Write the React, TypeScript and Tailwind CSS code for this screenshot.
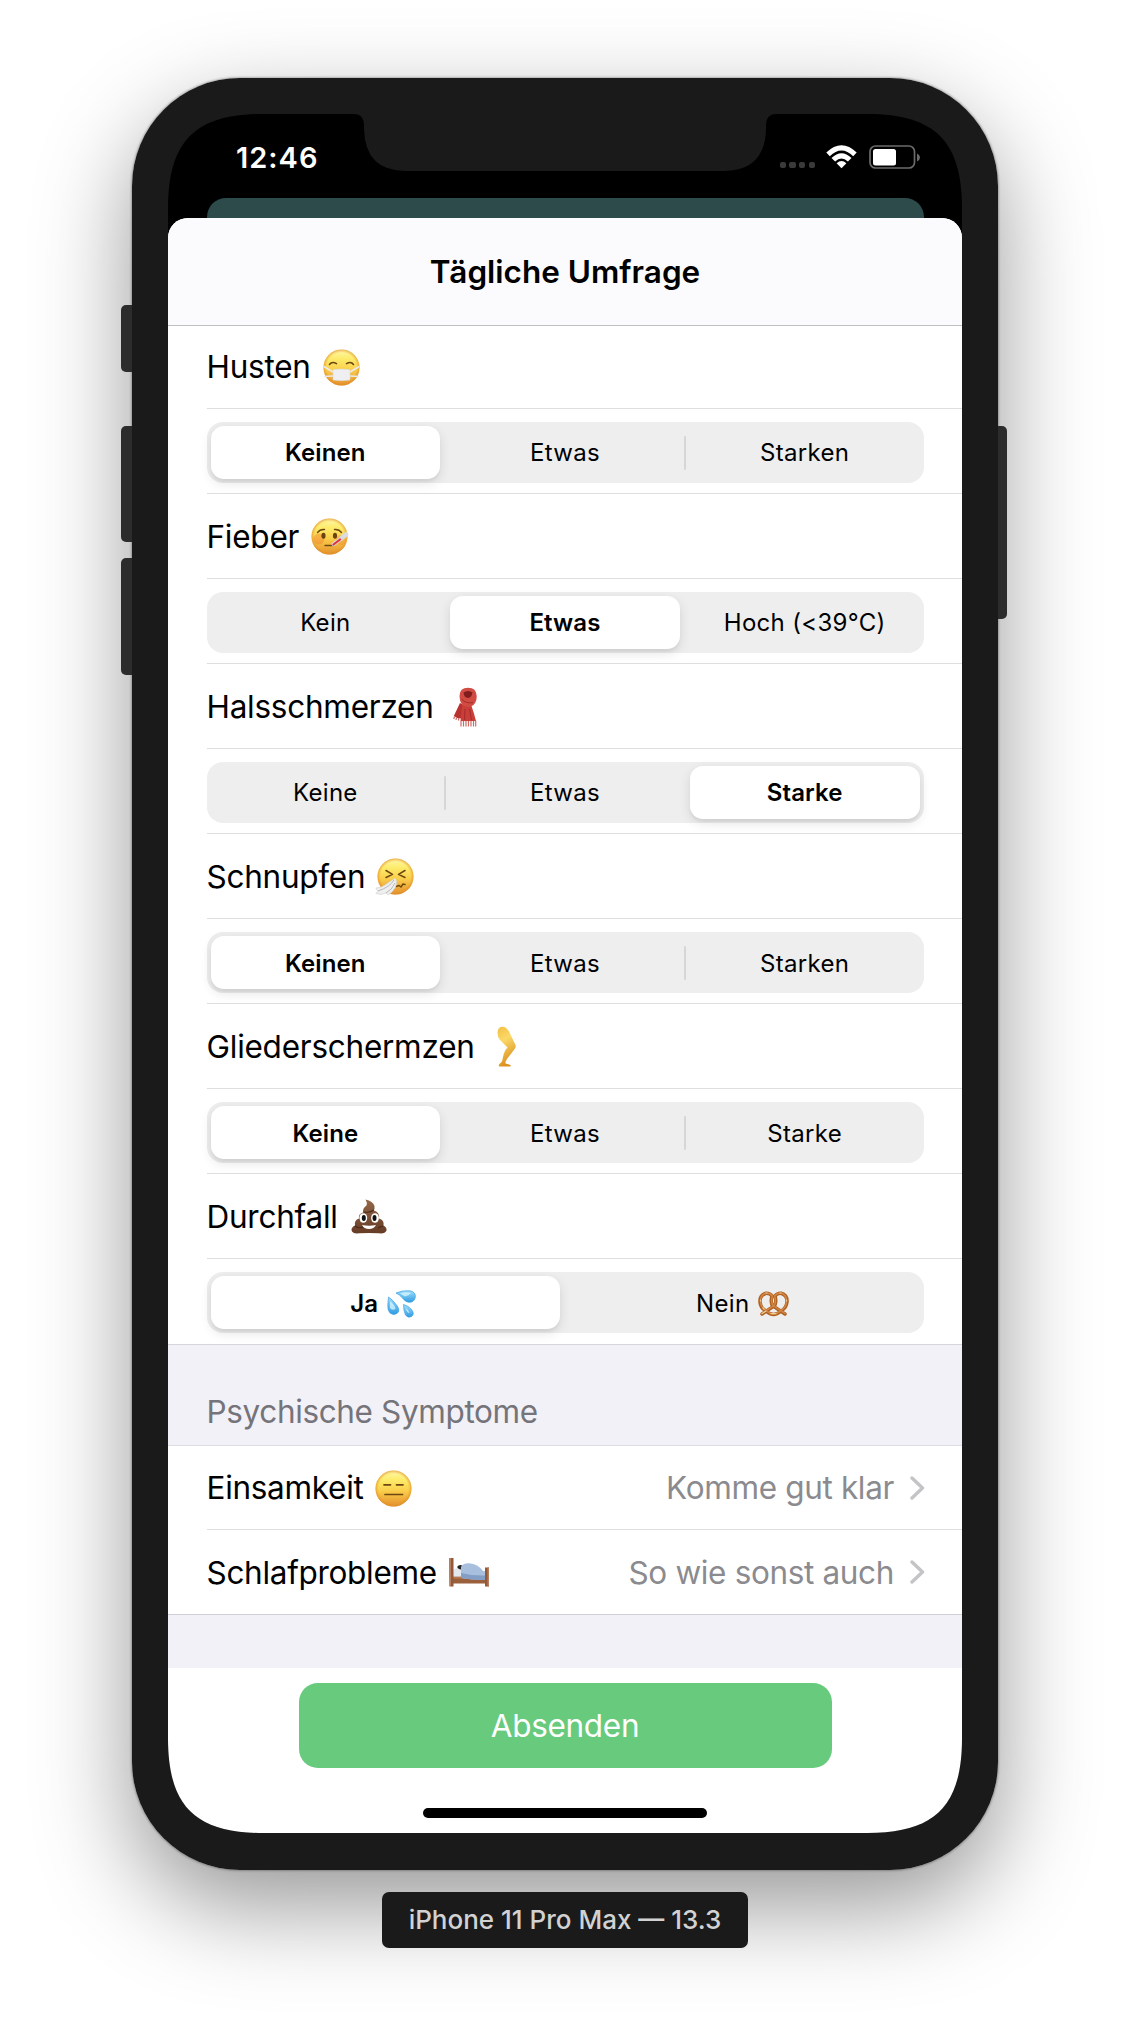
import { ReactNode } from "react";

function Face({ id, children }: { id: string; children: ReactNode }) {
  return (
    <svg viewBox="0 0 37 37" className="h-[37px] w-[37px] overflow-visible">
      <defs>
        <linearGradient id={id} x1="0" y1="0" x2="0" y2="1">
          <stop offset="0" stopColor="#fff7a8" />
          <stop offset="0.25" stopColor="#fdec6c" />
          <stop offset="0.55" stopColor="#fad04c" />
          <stop offset="1" stopColor="#e48f2c" />
        </linearGradient>
        <radialGradient id={id + "r"}>
          <stop offset="0.82" stopColor="#e99a2e" stopOpacity="0" />
          <stop offset="1" stopColor="#dd8a26" stopOpacity="0.65" />
        </radialGradient>
      </defs>
      <circle cx="18.5" cy="18.5" r="18" fill={"url(#" + id + ")"} />
      <circle cx="18.5" cy="18.5" r="18" fill={"url(#" + id + "r)"} />
      {children}
    </svg>
  );
}

function MaskFace() {
  return (
    <Face id="mask">
      <path d="M6.500 15.500Q9 12 13.500 14.600M23.500 14.600Q28 12 30.500 15.500" fill="none" stroke="#6b4712" strokeWidth="1.600" strokeLinecap="round" />
      <path d="M.8 17.500 10 23M36.200 17.500 27 23M1 27.500 10 27M36 27.500 27 27" stroke="#e9ebee" strokeWidth="1.600" />
      <path d="M10 20.500Q18.500 19.500 27 20.500V31Q18.500 32.500 10 31Z" fill="#efeff1" stroke="#d5d5d8" strokeWidth=".5" />
    </Face>
  );
}

function FeverFace() {
  return (
    <Face id="fever">
      <circle cx="8" cy="21" r="5.500" fill="#f0702e" opacity=".35" />
      <circle cx="30" cy="22" r="5" fill="#f0702e" opacity=".25" />
      <path d="M6.500 14.500Q9 11 13.500 11.500M23.500 11.500Q28 11 30.500 14.500" fill="none" stroke="#70490f" strokeWidth="1.400" strokeLinecap="round" />
      <ellipse cx="12.500" cy="17.800" rx="2.100" ry="3" fill="#6b4310" />
      <ellipse cx="24" cy="17.800" rx="2.100" ry="3" fill="#6b4310" />
      <path d="M14 27.500 22 27.500" fill="none" stroke="#70490f" strokeWidth="1.400" strokeLinecap="round" />
      <path d="M30 20.500 35 16.500" stroke="#dcdce0" strokeWidth="4.800" strokeLinecap="round" />
      <path d="M22.500 26.300 31 20" stroke="#d9d9de" strokeWidth="3.800" strokeLinecap="round" />
      <path d="M22.500 26.500 29 21.500" stroke="#e0343c" strokeWidth="2.200" strokeLinecap="round" />
    </Face>
  );
}

function SneezeFace() {
  return (
    <Face id="sneeze">
      <path d="M9 12.500 15.500 16.300 9 19.500M28 12.500 21.500 16.300 28 19.500" fill="none" stroke="#6e4710" strokeWidth="1.500" strokeLinecap="round" strokeLinejoin="round" />
      <path d="M19 28.500 22 27.500 24 29 26 26 28 26.500" fill="none" stroke="#6e4710" strokeWidth="1.500" strokeLinecap="round" />
      <path d="M18.500 20Q21 25 18 30 15 35 11 37L9 35Q4 37.500-1 35.500L1 33Q-1 32-1 30 4 30 8 27T18.500 20Z" fill="#efefef" stroke="#cfcfcf" strokeWidth=".6" />
      <path d="M17 22Q13 29 1 33M18 25Q15 32 9 35" fill="none" stroke="#b9b9bb" strokeWidth="1" />
    </Face>
  );
}

function BlankFace() {
  return (
    <Face id="blank">
      <path d="M9 14.800h6.500M21.500 14.800H28M10 24.500h17.500" stroke="#6e4710" strokeWidth="1.700" strokeLinecap="round" />
    </Face>
  );
}

function Scarf() {
  return (
    <svg viewBox="0 0 24 40" className="ml-[7px] h-[40px] w-[24px]">
      <path d="M7 16 .8 29Q4 31.500 8 31.500L15 20Z" fill="#b8332f" />
      <path d="M9 18 7.500 34H23Q21 26 18.500 19Z" fill="#c93e38" />
      <path d="M6.500 9Q6.500 .8 15 .8T23.700 9Q23.700 15 20.500 18 14.500 22 9 17.500 6.500 14 6.500 9Z" fill="#d24b43" />
      <path d="M10.500 5.500Q15 2.500 19.500 5.500 18.500 10.500 15 11 11 10.500 10.500 5.500Z" fill="#7f1d1c" />
      <path d="M8.500 12Q13 17 20 15.500M12 22 11.500 33M16.500 22 18.500 33" fill="none" stroke="#a42c2a" strokeWidth="1" />
      <path d="M1.500 29.500 .8 32M3.500 30.500 3 33M5.700 31 5.500 33.500M8 34V39.500M10.500 34V39.500M13 34V39.500M15.500 34V39.500M18 34V39.500M20.500 34V39.500M22.700 34V39.500" stroke="#cf6b66" strokeWidth="1.200" />
    </svg>
  );
}

function Leg() {
  return (
    <svg viewBox="0 0 20 41" className="ml-[10px] h-[41px] w-[20px]">
      <defs>
        <linearGradient id="leg" x1="0" y1="0" x2=".3" y2="1">
          <stop offset="0" stopColor="#f3bf45" />
          <stop offset=".4" stopColor="#fad968" />
          <stop offset="1" stopColor="#dc9120" />
        </linearGradient>
      </defs>
      <path d="M.5 6.500Q.8 .8 5.500 .8 9.500 .8 12 5.500L18.500 19Q19.200 20.500 18 22.500L10 33Q8 36 8.500 37.500L13.500 39Q14.500 40.500 12.500 40.500H2.500Q1.300 40 2 38.500L5 35.500 6.700 28Q7.500 24 10.500 21.500L3 14Q.4 11 .5 6.500Z" fill="url(#leg)" />
    </svg>
  );
}

function Poo() {
  return (
    <svg viewBox="0 0 36 35" className="ml-px h-[35px] w-[36px]">
      <defs>
        <linearGradient id="poo" x1="0" y1="0" x2="0" y2="1">
          <stop offset="0" stopColor="#946748" />
          <stop offset="1" stopColor="#653c26" />
        </linearGradient>
      </defs>
      <path d="M14.500.5Q22 2 23.500 7 24 10 22.500 11.500 29 13 28 19.500 33.500 21 32.500 26.500 36 28.500 35.500 31.500 34 35 28 34.300 18 33.500 8 34.300 1 35 .5 31 .5 28 4 26.500 3 21 8 19.500 7 15 12 13.500 11.500 9 15.500 6.500 16.500 3.500 14.500.5Z" fill="url(#poo)" />
      <path d="M13 13Q19 14 23 11M8 20Q10 22 13 22M27 20 24 22M4 27Q8 30 12 28M32 27 27 29" fill="none" stroke="#4b2917" strokeWidth="1.100" />
      <ellipse cx="12.300" cy="19" rx="3.900" ry="4.800" fill="#fff" />
      <ellipse cx="24" cy="19" rx="3.900" ry="4.800" fill="#fff" />
      <ellipse cx="12.800" cy="19" rx="2" ry="2.900" fill="#111" />
      <ellipse cx="23.500" cy="19" rx="2" ry="2.900" fill="#111" />
      <path d="M11 26Q18 27.500 25 26 23 30 18 30T11 26Z" fill="#fff" />
    </svg>
  );
}

function Bed() {
  return (
    <svg viewBox="0 0 40 29" className="h-[29px] w-[40px]">
      <path d="M3 13H37V20H3Z" fill="#c9d3de" />
      <path d="M3 18.500H38V25.500H3Z" fill="#9a5f3b" />
      <path d="M3 18.500H38V20.500H3Z" fill="#b97a50" />
      <path d="M4 12Q8 8.500 13 11V18.500H4Z" fill="#e3e8ef" />
      <path d="M8 9Q10 6 13.500 7.500L12.500 11.500Q10 12 8 9Z" fill="#252525" />
      <path d="M12 18V9Q14 5 20 5.300 29 6 34 13L37.500 14V22Q25 22.500 12 20Z" fill="#a8bfde" />
      <path d="M12 15Q24 18 37.500 17.500V22Q25 22.500 12 20Z" fill="#849fc6" />
      <path d="M0 0H4.500V28.500H.5ZM36 9.500H40V28.500H36Z" fill="#94593a" />
      <path d="M0 0H2V28H.5ZM38.500 9.500H40V28.500H38.500Z" fill="#b6805f" />
    </svg>
  );
}

function Sweat() {
  return (
    <svg viewBox="0 0 29 28" className="h-[28px] w-[29px]">
      <defs>
        <linearGradient id="drop" x1="0" y1="0" x2="0" y2="1">
          <stop offset="0" stopColor="#9fe0fb" />
          <stop offset="1" stopColor="#2f9be2" />
        </linearGradient>
      </defs>
      <g fill="url(#drop)" stroke="#3aa0e4" strokeWidth=".7">
        <path d="M9 3Q16 0 23 .8 29 2 28.300 7.500 27 12.500 22 12.300 18 12 15.500 8 12.500 4.500 9 3Z" />
        <path d="M1.500 7Q6 10 9.500 15 13.500 20 10.500 23 7 26 3 23 .5 20 .8 15Z" />
        <path d="M16.500 14.500Q21 15.500 24.500 19.500 28 24 24.500 26.500 21 28.500 18.500 25 16.500 21 16.500 14.500Z" />
      </g>
      <path d="M13 3.300Q19 1.500 24 3 21 7 17 6ZM3 11Q8 15 8.500 19 5 21 3 18ZM18.500 18Q22 20 22.500 23 20 23 18.500 18Z" fill="#d4f2fd" opacity=".8" />
    </svg>
  );
}

function Pretzel() {
  return (
    <svg viewBox="0 0 31 26" className="h-[26px] w-[31px]">
      <g fill="none" strokeLinecap="round">
        <path d="M4 23 16 15Q19 12 17 5 19 2 23 2.200 29.500 4 29 11 28.500 17 23 20 19 23.500 15.500 23.500 12 23.500 8 20 2.500 17 2 11 1.500 4 8 2.200 12 2 14 5 12 12 15 15L27 23" stroke="#b0601f" strokeWidth="3.500" />
        <path d="M4 22.500 16 14.500Q18.500 12 16.700 5 19 1.700 23 2 29 4 28.500 11 28 16.500 23 19.500 19 23 15.500 23 12 23 8 19.500 3 16.500 2.500 11 2 4 8 2 12 1.800 14.300 5 12.500 12 15 14.500L27 22.500" stroke="#d18747" strokeWidth="1.500" />
        <path d="M4 22.500 8 20M5 17 6 18M2.500 9V10M8 2H9M22 2H23M28.500 9V10M13 22.700H18" stroke="#f1c993" strokeWidth="1.200" />
      </g>
    </svg>
  );
}

type Option = { text: string; icon?: ReactNode };

const o = (text: string, icon?: ReactNode): Option => ({ text, icon });

function Segmented({ options, selected }: { options: Option[]; selected: number }) {
  return (
    <div
      className={
        "relative mt-[12.500px] grid h-[61.500px] w-[717px] gap-[10px] rounded-[16px] bg-[#eeeeef] p-[4px] " +
        (options.length === 2 ? "grid-cols-2" : "grid-cols-3")
      }
    >
      {options.map((option, i) => (
        <div
          key={i}
          className={
            "relative flex items-center justify-center gap-[9px] whitespace-nowrap rounded-[13px] pt-[2px] text-[24px] text-black " +
            (option.icon ? "pr-[4px] " : "") +
            (i === selected
              ? "bg-white font-semibold tracking-[0.1px] shadow-[0_4px_12px_rgba(0,0,0,0.11),0_3px_2px_rgba(0,0,0,0.04)]"
              : "font-normal tracking-[0.3px]")
          }
        >
          <span>{option.text}</span>
          {option.icon}
          {i < options.length - 1 && i !== selected && i + 1 !== selected && (
            <span className="absolute -right-[6px] top-[10px] h-[34px] w-[2px] rounded-full bg-[#d6d6d8]" />
          )}
        </div>
      ))}
    </div>
  );
}

const questions = [
  { label: "Husten", icon: <MaskFace />, selected: 0, options: [o("Keinen"), o("Etwas"), o("Starken")] },
  { label: "Fieber", icon: <FeverFace />, selected: 1, options: [o("Kein"), o("Etwas"), o("Hoch (<39°C)")] },
  { label: "Halsschmerzen", icon: <Scarf />, selected: 2, options: [o("Keine"), o("Etwas"), o("Starke")] },
  { label: "Schnupfen", icon: <SneezeFace />, selected: 0, options: [o("Keinen"), o("Etwas"), o("Starken")] },
  { label: "Gliederschermzen", icon: <Leg />, selected: 0, options: [o("Keine"), o("Etwas"), o("Starke")] },
  { label: "Durchfall", icon: <Poo />, selected: 0, options: [o("Ja", <Sweat />), o("Nein", <Pretzel />)] },
];

function LinkRow({ label, icon, value, last }: { label: string; icon: ReactNode; value: string; last?: boolean }) {
  return (
    <div className={"pl-[38.500px] " + (last ? "h-[85px] border-b border-[#d0cfd4]" : "h-[84px]")}>
      <div className={"flex h-full items-center pr-[37px] pt-[2px] text-[31.500px] " + (last ? "" : "border-b border-[#dededf]")}>
        <span className="tracking-[-0.3px] text-black">{label}</span>
        <span className="ml-[12px]">{icon}</span>
        <span className="ml-auto tracking-[-0.350px] text-[#8b8b8f]">{value}</span>
        <svg viewBox="0 0 15 24" className="-mt-px ml-[16px] h-[24px] w-[15px]">
          <path d="M2 2 12.500 12 2 22" fill="none" stroke="#c4c4c7" strokeWidth="3.400" strokeLinecap="round" strokeLinejoin="round" />
        </svg>
      </div>
    </div>
  );
}

function StatusBar() {
  return (
    <div className="relative flex h-[84px] justify-between pl-[68px] pr-[41px]">
      <span className="mt-[23px] text-[29px] font-semibold leading-[42px] tracking-[1px] text-white">12:46</span>
      <svg viewBox="0 0 422 58" className="absolute left-[186px] top-[-1px] h-[58px] w-[422px]">
        <path d="M0 0V1Q10 1 10 13V16Q11 58 52 58H370Q411 58 412 16V13Q412 1 422 1V0Z" fill="#1a1a1a" />
      </svg>
      <div className="mt-[31px] flex h-[24px] items-start">
        <div className="mt-[17px] flex gap-[3.400px]">
          <i className="h-[6.300px] w-[6.300px] rounded-[2px] bg-[#3a3a3a]" />
          <i className="h-[6.300px] w-[6.300px] rounded-[2px] bg-[#3a3a3a]" />
          <i className="h-[6.300px] w-[6.300px] rounded-[2px] bg-[#3a3a3a]" />
          <i className="h-[6.300px] w-[6.300px] rounded-[2px] bg-[#3a3a3a]" />
        </div>
        <svg viewBox="0 0 31 24" className="ml-[11px] h-[24px] w-[31px]" fill="#fff">
          <path d="M.3 7.500Q15.500-7 30.700 7.500L27.200 11.200Q15.500 0 3.800 11.200Z" />
          <path d="M5.500 13Q15.500 3.500 25.500 13L21.900 16.500Q15.500 10.500 9.100 16.500Z" />
          <path d="M10.600 18.200Q15.500 13.800 20.400 18.200L15.500 23.300Z" />
        </svg>
        <svg viewBox="0 0 52 24" className="ml-[12px] h-[24px] w-[52px]">
          <rect x="1" y="1" width="44.500" height="22" rx="5.500" fill="none" stroke="#6b6b6b" strokeWidth="1.700" />
          <rect x="4" y="4" width="23" height="16.500" rx="2.500" fill="#fff" />
          <path d="M48 8.500Q51 10 51 12.500T48 16.500Z" fill="#6b6b6b" />
        </svg>
      </div>
    </div>
  );
}

export default function App() {
  return (
    <div className="flex h-[2020px] w-[1130px] flex-col items-center overflow-hidden bg-white pt-[78px] font-['Inter',sans-serif]">
      <div className="relative h-[1792px] w-[866px] rounded-[108px] shadow-[0_0_2px_1px_rgba(0,0,0,0.25),0_36px_96px_rgba(0,0,0,0.41)]">
        <div className="absolute left-[-11.500px] top-[226.500px] h-[67px] w-[20px] rounded-[5px] bg-[#2c2c2c]" />
        <div className="absolute left-[-11.500px] top-[348px] h-[116px] w-[20px] rounded-[5px] bg-[#2c2c2c]" />
        <div className="absolute left-[-11.500px] top-[480px] h-[117px] w-[20px] rounded-[5px] bg-[#2c2c2c]" />
        <div className="absolute right-[-9px] top-[348px] h-[193px] w-[20px] rounded-[5px] bg-[#2c2c2c]" />
        <div className="relative h-full rounded-[108px] bg-[#1a1a1a] p-[36px]">
          <div className="h-[1719px] w-[794px] bg-black [clip-path:path('M0_95C0_27_27_0_95_0H699C767_0_794_27_794_95V1624C794_1692_767_1719_699_1719H95C27_1719_0_1692_0_1624Z')]">
            <StatusBar />
            <div className="mx-[38.500px] h-[36px] rounded-t-[19px] bg-[#2d4b4b]" />
            <div className="relative mt-[-16.500px] h-[1616px] overflow-hidden rounded-t-[20px] bg-white">
              <header className="flex h-[108.500px] items-center justify-center border-b border-[#bfbfc2] bg-[#fbfbfd] text-[31.500px] font-semibold text-black">
                <span>Tägliche Umfrage</span>
              </header>
              {questions.map((q, i) => (
                <section key={q.label}>
                  <div className={"pl-[38.500px] " + (i === 0 ? "h-[83px]" : "h-[85.060px]")}>
                    <div
                      className={
                        "flex h-full items-center gap-[12px] border-b border-[#dededf] text-[31.500px] text-black " +
                        (i === 0 ? "" : "pt-px")
                      }
                    >
                      <span className="tracking-[-0.250px]">{q.label}</span>
                      {q.icon}
                    </div>
                  </div>
                  <div className={"h-[85.060px] pl-[38.500px] " + (i === 5 ? "border-b border-[#d6d5da]" : "")}>
                    <div className={"flex h-full " + (i === 5 ? "" : "border-b border-[#dededf]")}>
                      <Segmented options={q.options} selected={q.selected} />
                    </div>
                  </div>
                </section>
              ))}
              <h2 className="flex h-[101px] items-end border-b border-[#dedde3] bg-[#f2f1f7] pb-[9px] pl-[38.500px] text-[31.500px] font-normal tracking-[-0.360px] text-[#75747a]">
                Psychische Symptome
              </h2>
              <LinkRow label="Einsamkeit" icon={<BlankFace />} value="Komme gut klar" />
              <LinkRow label="Schlafprobleme" icon={<Bed />} value="So wie sonst auch" last />
              <div className="h-[53px] bg-[#f2f1f7]" />
              <button className="mx-auto mt-[15px] flex h-[85.500px] w-[533px] items-center justify-center rounded-[19px] bg-[#67ca7d] text-[31.500px] font-normal tracking-[-0.300px] text-white">
                Absenden
              </button>
              <div className="mx-auto mt-[40px] h-[10px] w-[284px] rounded-full bg-black" />
            </div>
          </div>
        </div>
      </div>
      <div className="relative mt-[22px] flex h-[56px] w-[366px] items-center justify-center whitespace-nowrap rounded-[7px] bg-[#1a1a1a] pb-px text-[26px] font-medium text-[#d2d2d2]">
        iPhone 11 Pro Max — 13.3
      </div>
    </div>
  );
}
